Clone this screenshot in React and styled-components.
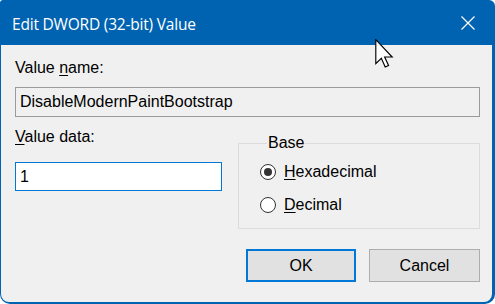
import React from 'react';
import styled, { createGlobalStyle } from 'styled-components';

const GlobalStyle = createGlobalStyle`
  html, body {
    margin: 0;
    padding: 0;
    background: #ffffff;
  }
  body {
    font-family: 'Liberation Sans', Arial, sans-serif;
  }
`;

const App = () => {
  return (
    <>
      <GlobalStyle />
      <Window>
        <TitleBar>
          <Title>Edit DWORD (32-bit) Value</Title>
          <CloseIcon viewBox="0 0 14 14">
            <path d="M0.5 0.5 L13.5 13.5 M13.5 0.5 L0.5 13.5" stroke="#fff" strokeWidth="1.2" fill="none" />
          </CloseIcon>
        </TitleBar>
        <Body>
          <Label top={13}>
            Value <u>n</u>ame:
          </Label>
          <TextBox readOnly value="DisableModernPaintBootstrap" />
          <Row>
            <DataColumn>
              <Label top={10}>
                <u>V</u>alue data:
              </Label>
              <TextBox focused defaultValue="1" />
            </DataColumn>
            <Group>
              <Legend>Base</Legend>
              <RadioRow>
                <Radio checked />
                <RadioText>
                  <u>H</u>exadecimal
                </RadioText>
              </RadioRow>
              <RadioRow>
                <Radio />
                <RadioText>
                  <u>D</u>ecimal
                </RadioText>
              </RadioRow>
            </Group>
          </Row>
          <Buttons>
            <Button primary>OK</Button>
            <Button>Cancel</Button>
          </Buttons>
        </Body>
        <Cursor viewBox="0 0 13 20">
          <path d="M0.5 0.5 L0.5 17 L4.3 13.3 L7 19.3 L9.3 18.3 L6.6 12.4 L11.8 12.4 Z" fill="#fff" stroke="#000" strokeWidth="0.8" strokeLinejoin="miter" />
        </Cursor>
      </Window>
    </>
  );
};

export default App;

const Window = styled.div`
  position: relative;
  width: 495px;
  height: 304px;
  box-sizing: border-box;
  display: flex;
  flex-direction: column;
  background: #0063b1;
  border-radius: 3px 6px 10px 10px;
  padding: 0 3px 2px 1px;
  overflow: hidden;
`;

const TitleBar = styled.div`
  height: 45px;
  flex-shrink: 0;
  display: flex;
  align-items: center;
  justify-content: space-between;
  padding: 0 17px 0 11px;
`;

const Title = styled.div`
  color: #ffffff;
  font-family: 'Open Sans', 'Noto Sans', sans-serif;
  font-size: 15.5px;
  letter-spacing: -0.2px;
  margin-top: 2px;
`;

const CloseIcon = styled.svg`
  width: 14px;
  height: 14px;
`;

const Body = styled.div`
  flex: 1;
  background: #f0f0f0;
  border-radius: 0 0 8px 8px;
  display: flex;
  flex-direction: column;
  padding: 0 12px 0 14px;
  color: #000;
  font-size: 16px;
`;

const Label = styled.div`
  margin-top: ${({ top }) => top}px;
  height: 20px;
  line-height: 20px;
  margin-bottom: 9px;
  u {
    text-decoration-thickness: 1px;
    text-underline-offset: 2px;
  }
`;

const TextBox = styled.input`
  box-sizing: border-box;
  width: 100%;
  height: 30px;
  margin: 0;
  padding: 0 4px;
  font-family: 'Liberation Sans', Arial, sans-serif;
  font-size: 16px;
  color: #000;
  outline: none;
  border: 1px solid ${({ focused }) => (focused ? '#0078d7' : '#9a9a9a')};
  background: ${({ focused }) => (focused ? '#ffffff' : '#f0f0f0')};
  border-radius: 0;
`;

const Row = styled.div`
  display: flex;
  gap: 16px;
  align-items: flex-start;
`;

const DataColumn = styled.div`
  width: 207px;
  display: flex;
  flex-direction: column;
  ${Label} {
    margin-bottom: 15px;
  }
  ${TextBox} {
    height: 29px;
  }
`;

const Group = styled.fieldset`
  flex: 1;
  margin: 17px 0 0;
  padding: 10px 0 0 21px;
  height: 95px;
  box-sizing: border-box;
  border: 1px solid #dcdcdc;
  display: flex;
  flex-direction: column;
  gap: 13px;
`;

const Legend = styled.legend`
  padding: 0 1px;
  margin-left: 7px;
  font-size: 16px;
  line-height: 18px;
`;

const RadioRow = styled.div`
  display: flex;
  align-items: center;
  gap: 8px;
  height: 20px;
`;

const Radio = styled.span`
  width: 16px;
  height: 16px;
  box-sizing: border-box;
  border: 1px solid #333;
  border-radius: 50%;
  background: #fff;
  display: flex;
  align-items: center;
  justify-content: center;
  &::after {
    content: '';
    display: ${({ checked }) => (checked ? 'block' : 'none')};
    width: 8px;
    height: 8px;
    border-radius: 50%;
    background: #333;
  }
`;

const RadioText = styled.span`
  line-height: 20px;
  u {
    text-decoration-thickness: 1px;
    text-underline-offset: 2px;
  }
`;

const Buttons = styled.div`
  display: flex;
  justify-content: flex-end;
  gap: 13px;
  margin-top: 20px;
`;

const Button = styled.button`
  width: ${({ primary }) => (primary ? '110px' : '111px')};
  height: 33px;
  box-sizing: border-box;
  margin: 0;
  padding: 0;
  font-family: 'Liberation Sans', Arial, sans-serif;
  font-size: 16px;
  color: #000;
  background: #e1e1e1;
  border: ${({ primary }) => (primary ? '2px solid #0078d7' : '1px solid #adadad')};
  border-radius: 0;
`;

const Cursor = styled.svg`
  position: absolute;
  left: 375px;
  top: 39px;
  width: 19px;
  height: 29px;
`;
